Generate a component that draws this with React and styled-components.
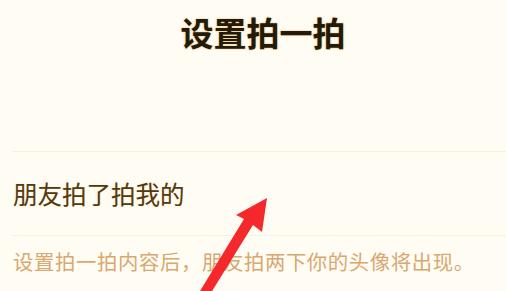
import styled, { createGlobalStyle } from "styled-components";

const GlobalStyle = createGlobalStyle`
    html, body {
        margin: 0;
        padding: 0;
        background: #fffcf4;
        overflow: hidden;
    }
    #root {
        height: 291px;
    }
`;

const Page = styled.div`
    position: relative;
    width: 506px;
    height: 291px;
    overflow: hidden;
    background: #fffcf4;
    font-family: "Noto Sans CJK SC", "Noto Sans", sans-serif;
`;

const Header = styled.div`
    height: 151px;
    padding-top: 12px;
    box-sizing: border-box;
    display: flex;
    justify-content: center;
`;

const Title = styled.h1`
    margin: 0;
    font-size: 33px;
    line-height: 40px;
    font-weight: 700;
    color: #241a08;
    text-shadow: 0 0 2px rgba(214, 150, 50, 0.75);
    padding-left: 20px;
`;

const Section = styled.div`
    margin-left: 12px;
    border-top: 1px solid #f8efe2;
`;

const Row = styled.div`
    height: 83px;
    display: flex;
    align-items: center;
    padding-left: 1px;
    border-bottom: 1px solid #f8efe2;
`;

const RowLabel = styled.span`
    font-size: 24.5px;
    color: #553a10;
    text-shadow: 0 0 1px rgba(200, 150, 70, 0.4);
`;

const Note = styled.p`
    margin: ${({ $muted }) => ($muted ? "9px 0 0" : "0")};
    padding: ${({ $muted }) => ($muted ? "0 0 0 1px" : "10px 0 0 1px")};
    font-size: 20.4px;
    letter-spacing: 0.6px;
    line-height: 30px;
    color: ${({ $muted }) => ($muted ? "#cbc4b8" : "#d8a870")};
    white-space: nowrap;
`;

const Arrow = styled.svg`
    position: absolute;
    left: 0;
    top: 0;
    pointer-events: none;
`;

const App = () => {
    return (
        <>
            <GlobalStyle />
            <Page>
                <Header>
                    <Title>设置拍一拍</Title>
                </Header>
                <Section>
                    <Row>
                        <RowLabel>朋友拍了拍我的</RowLabel>
                    </Row>
                    <Note>设置拍一拍内容后，朋友拍两下你的头像将出现。</Note>
                    <Note $muted>若对方未设置，则仅显示朋友拍了拍你的提示文字。</Note>
                </Section>
                <Arrow width="506" height="291" viewBox="0 0 506 291">
                    <polygon
                        points="267,198 262,232 253,225 209,296 197,296 244,219 236,215"
                        fill="#f5292b"
                    />
                </Arrow>
            </Page>
        </>
    );
};

export default App;
